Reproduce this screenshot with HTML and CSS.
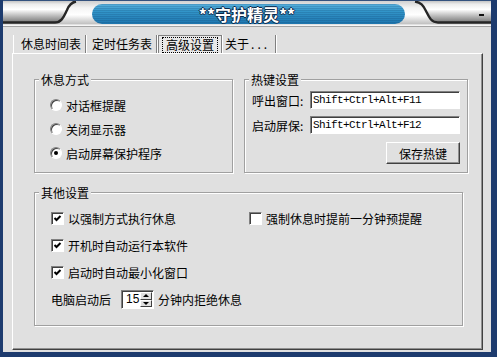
FILE: index.html
```html
<html>
  <head>
    <title>守护精灵</title>
    <link rel="stylesheet" href="styles.css">
  </head>
  <body>
    <div class="window">
      <div class="titlebar">
        <svg class="skin" width="488" height="28" viewBox="3 0 488 28">
          <defs>
            <linearGradient id="chrome" x1="0" y1="0" x2="0" y2="1">
              <stop offset="0" stop-color="#c4c4c4"/>
              <stop offset="0.15" stop-color="#ececec"/>
              <stop offset="0.4" stop-color="#ffffff"/>
              <stop offset="0.7" stop-color="#bdbdbd"/>
              <stop offset="1" stop-color="#7c7c7c"/>
            </linearGradient>
            <linearGradient id="chromeLight" x1="0" y1="0" x2="0" y2="1">
              <stop offset="0" stop-color="#d0d0d0"/>
              <stop offset="0.3" stop-color="#f4f4f4"/>
              <stop offset="0.6" stop-color="#ffffff"/>
              <stop offset="1" stop-color="#c0c0c0"/>
            </linearGradient>
            <linearGradient id="blue" x1="0" y1="0" x2="0" y2="1">
              <stop offset="0" stop-color="#5ab2de"/>
              <stop offset="0.35" stop-color="#3396ca"/>
              <stop offset="1" stop-color="#1e76ae"/>
            </linearGradient>
            <pattern id="stripes" width="4" height="2" patternUnits="userSpaceOnUse">
              <rect width="4" height="1" fill="#0a3a66" fill-opacity="0.18"/>
            </pattern>
          </defs>
          <rect x="3" y="0" width="488" height="28" fill="#e0e0e0"/>
          <rect x="3" y="1" width="488" height="23" fill="url(#chromeLight)"/>
          <path d="M3 1 H74 C69 5 67 10 65 14 C62 20 60 22 54 22 H3 Z" fill="url(#chrome)"/>
          <path d="M3 22.5 H55 C62 22.5 64 16 67 10 C69 5 71 2.5 76 1.5" fill="none" stroke="#262626" stroke-width="2.4"/>
          <path d="M418 1 C423 3 425 7 428 13 C431 19 433 22 440 22 H491 V1 Z" fill="url(#chrome)"/>
          <path d="M415 1.5 C421 2.5 423 5 426 11 C429 17 431 22.5 438 22.5 H491" fill="none" stroke="#262626" stroke-width="2.4"/>
          <rect x="92" y="4" width="313" height="20" rx="10" fill="url(#blue)"/>
          <rect x="92" y="4" width="313" height="20" rx="10" fill="url(#stripes)"/>
          <rect x="479" y="14" width="5" height="2" fill="#111"/>
          <rect x="3" y="0" width="488" height="1" fill="#34527e"/>
          <rect x="3" y="25" width="488" height="1" fill="#f6f6f6"/>
          <rect x="3" y="26" width="488" height="1" fill="#a4a4a4"/>
        </svg>
        <span class="title">**守护精灵**</span>
      </div>

      <div class="tabs">
        <span class="tab first">休息时间表</span>
        <span class="tab">定时任务表</span>
        <span class="tab active"><span class="focus">高级设置</span></span>
        <span class="tab last">关于<span class="dots">...</span></span>
      </div>

      <div class="panel">
        <div class="top-row">
          <div class="group rest">
            <span class="legend">休息方式</span>
            <div class="options">
              <div class="opt"><span class="radio"></span>对话框提醒</div>
              <div class="opt"><span class="radio"></span>关闭显示器</div>
              <div class="opt"><span class="radio checked"></span>启动屏幕保护程序</div>
            </div>
          </div>

          <div class="group hotkey">
            <span class="legend">热键设置</span>
            <div class="field">
              <span class="label">呼出窗口:</span>
              <span class="input">Shift+Ctrl+Alt+F11</span>
            </div>
            <div class="field">
              <span class="label">启动屏保:</span>
              <span class="input">Shift+Ctrl+Alt+F12</span>
            </div>
            <button class="button">保存热键</button>
          </div>
        </div>

        <div class="group other">
          <span class="legend">其他设置</span>
          <div class="checks">
            <div class="row">
              <div class="check wide"><span class="box"><svg width="9" height="9" viewBox="0 0 9 9"><polyline points="1.5,4 3.5,6 7.5,2" fill="none" stroke="#000" stroke-width="2"/></svg></span>以强制方式执行休息</div>
              <div class="check"><span class="box"></span>强制休息时提前一分钟预提醒</div>
            </div>
            <div class="row">
              <div class="check"><span class="box"><svg width="9" height="9" viewBox="0 0 9 9"><polyline points="1.5,4 3.5,6 7.5,2" fill="none" stroke="#000" stroke-width="2"/></svg></span>开机时自动运行本软件</div>
            </div>
            <div class="row">
              <div class="check"><span class="box"><svg width="9" height="9" viewBox="0 0 9 9"><polyline points="1.5,4 3.5,6 7.5,2" fill="none" stroke="#000" stroke-width="2"/></svg></span>启动时自动最小化窗口</div>
            </div>
            <div class="row">
              <span>电脑启动后</span>
              <span class="spin">
                <span class="num">15</span>
                <span class="arrows">
                  <span class="arrow up"></span>
                  <span class="arrow down"></span>
                </span>
              </span>
              <span>分钟内拒绝休息</span>
            </div>
          </div>
        </div>
      </div>
    </div>
  </body>
</html>
```

FILE: styles.css
```css
/* General */
* {
  box-sizing: border-box;
}

body {
  margin: 0;
  font-family: "Noto Sans CJK SC", sans-serif;
  font-size: 12px;
  color: #000;
}

.window {
  width: 497px;
  height: 357px;
  background-color: #e0e0e0;
  border-left: 3px solid #1d3b6e;
  border-right: 6px solid #1d3b6e;
  border-bottom: 5px solid #1d3b6e;
}

/* Title bar skin */
.titlebar {
  position: relative;
  height: 28px;
  display: flex;
  justify-content: center;
  align-items: flex-start;
}

.skin {
  position: absolute;
  left: 0;
  top: 0;
}

.title {
  position: relative;
  margin-top: 3px;
  font-size: 16px;
  font-weight: bold;
  line-height: 22px;
  color: #fff;
  text-shadow: -1px 0 #0c2748, 1px 0 #0c2748, 0 -1px #0c2748, 0 1px #0c2748;
}

/* Tabs */
.tabs {
  display: flex;
  height: 18px;
  margin: 7px 0 0 10px;
}

.tab {
  line-height: 17px;
  padding: 0 4px 0 5px;
  border-right: 1px solid #808080;
  box-shadow: 1px 0 0 #fff;
  margin-right: 1px;
}

.tab.first {
  border-left: 1px solid #fff;
  padding-left: 7px;
}

.tab.active {
  background-color: #e8e8e8;
  border-left: 1px solid #808080;
  border-top: 1px solid #808080;
  padding: 1px 3px 0 3px;
  line-height: 14px;
}

.tab.last {
  padding-left: 2px;
  padding-right: 5px;
}

.dots {
  margin-left: 2px;
  letter-spacing: 3px;
}

.focus {
  display: inline-block;
  padding: 0 3px;
  border: 1px dotted #000;
}

/* Panel */
.panel {
  width: 471px;
  height: 297px;
  margin-left: 9px;
  padding: 25px 0 0 21px;
  border: 1px solid;
  border-color: #fff #404040 #404040 #fff;
  box-shadow: inset -1px -1px #909090;
}

.top-row {
  display: flex;
  gap: 11px;
}

.group {
  border: 1px solid #a0a0a0;
  box-shadow: inset 1px 1px #fff, 1px 1px #fff;
}

.legend {
  display: block;
  width: fit-content;
  height: 14px;
  line-height: 14px;
  margin: -7px 0 0 4px;
  padding: 0 2px;
  background-color: #e0e0e0;
}

/* Rest mode */
.rest {
  width: 199px;
  height: 94px;
}

.options {
  margin: 6px 0 0 15px;
}

.opt {
  display: flex;
  align-items: center;
  gap: 4px;
  height: 24px;
}

.radio {
  width: 12px;
  height: 12px;
  border-radius: 50%;
  border: 1px solid;
  border-color: #808080 #fff #fff #808080;
  background-color: #fff;
  box-shadow: inset 1px 1px #404040;
  display: flex;
  align-items: center;
  justify-content: center;
}

.radio.checked::after {
  content: "";
  width: 4px;
  height: 4px;
  border-radius: 50%;
  background-color: #000;
}

/* Hotkeys */
.hotkey {
  width: 224px;
  height: 94px;
  padding: 0 7px 0 7px;
  display: flex;
  flex-direction: column;
}

.hotkey .legend {
  margin-left: -3px;
}

.field {
  display: flex;
  align-items: center;
  height: 18px;
  margin-top: 4px;
}

.field + .field {
  margin-top: 7px;
}

.label {
  width: 58px;
}

.input {
  width: 150px;
  height: 18px;
  padding-left: 2px;
  background-color: #fff;
  border: 1px solid;
  border-color: #808080 #fff #fff #808080;
  box-shadow: inset 1px 1px #404040;
  font-family: "Liberation Mono", monospace;
  font-size: 11px;
  letter-spacing: -0.6px;
  line-height: 16px;
}

.button {
  align-self: flex-end;
  width: 74px;
  height: 22px;
  margin-top: 8px;
  padding: 0;
  font-family: inherit;
  font-size: 12px;
  background-color: #e0e0e0;
  border: 1px solid;
  border-color: #fff #404040 #404040 #fff;
  box-shadow: inset -1px -1px #909090;
}

/* Other settings */
.other {
  width: 429px;
  height: 134px;
  margin-top: 19px;
}

.checks {
  margin: 5px 0 0 16px;
}

.row {
  display: flex;
  align-items: center;
  height: 27px;
}

.check {
  display: flex;
  align-items: center;
  gap: 4px;
}

.check.wide {
  width: 198px;
}

.box {
  width: 13px;
  height: 13px;
  border: 1px solid;
  border-color: #808080 #fff #fff #808080;
  box-shadow: inset 1px 1px #404040;
  background-color: #fff;
  display: flex;
  align-items: center;
  justify-content: center;
}

.spin {
  display: flex;
  width: 33px;
  height: 19px;
  margin: 0 4px 0 10px;
  padding: 1px;
  background-color: #fff;
  border: 1px solid;
  border-color: #808080 #fff #fff #808080;
  box-shadow: inset 1px 1px #404040;
}

.num {
  flex: 1;
  padding-left: 3px;
  font-family: "Liberation Sans", sans-serif;
  font-size: 12px;
  line-height: 15px;
}

.arrows {
  display: flex;
  flex-direction: column;
  width: 12px;
}

.arrow {
  flex: 1;
  display: flex;
  align-items: center;
  justify-content: center;
  background-color: #e0e0e0;
  border: 1px solid;
  border-color: #fff #404040 #404040 #fff;
}

.arrow::after {
  content: "";
  border-left: 3px solid transparent;
  border-right: 3px solid transparent;
}

.arrow.up::after {
  border-bottom: 3px solid #000;
}

.arrow.down::after {
  border-top: 3px solid #000;
}
```
